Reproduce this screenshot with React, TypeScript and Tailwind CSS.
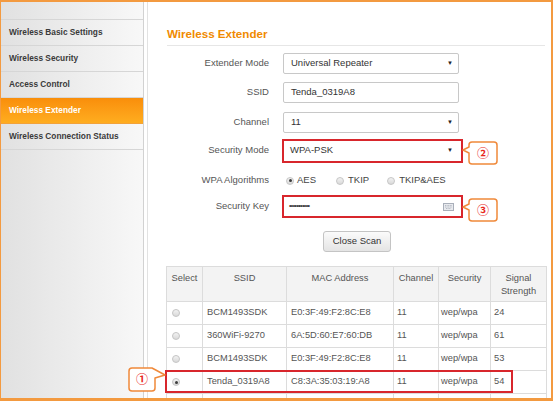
import clsx from 'clsx';

const menu = [
  'Wireless Basic Settings',
  'Wireless Security',
  'Access Control',
  'Wireless Extender',
  'Wireless Connection Status',
];

const networks = [
  { ssid: 'BCM1493SDK', mac: 'E0:3F:49:F2:8C:E8', ch: '11', sec: 'wep/wpa', sig: '24' },
  { ssid: '360WiFi-9270', mac: '6A:5D:60:E7:60:DB', ch: '11', sec: 'wep/wpa', sig: '61' },
  { ssid: 'BCM1493SDK', mac: 'E0:3F:49:F2:8C:E8', ch: '11', sec: 'wep/wpa', sig: '53' },
  { ssid: 'Tenda_0319A8', mac: 'C8:3A:35:03:19:A8', ch: '11', sec: 'wep/wpa', sig: '54', on: true },
  { ssid: 'vivace_hotel WIFI', mac: 'C8:3A:35:F7:25:C8', ch: '11', sec: 'none', sig: '57' },
];

function Radio({ on }: { on?: boolean }) {
  return (
    <span className="w-[8px] h-[8px] shrink-0 rounded-full border border-[#c6c6c6] bg-linear-to-b from-[#f2f2f2] to-[#d9d9d9] flex items-center justify-center">
      {on && <span className="w-[3px] h-[3px] rounded-full bg-[#3c3c3c]" />}
    </span>
  );
}

function Arrow() {
  return <span className="text-[6px] text-[#222] mr-[5px]">▼</span>;
}

// orange speech-bubble tag with a red circled number
function Callout({ n, tail, className }: { n: string; tail: 'left' | 'right'; className: string }) {
  const d =
    tail === 'left'
      ? 'M11 2 H33 Q36 2 36 5 V21 Q36 24 33 24 H11 Q8 24 8 21 V13 L2 10 L8 7 V5 Q8 2 11 2 Z'
      : 'M5 2 H25 L38 9 L28 12 V22 Q28 25 25 25 H5 Q2 25 2 22 V5 Q2 2 5 2 Z';
  return (
    <div className={clsx('absolute w-[40px] h-[27px]', className)}>
      <svg width="40" height="27" className="absolute inset-0">
        <path d={d} fill="white" stroke="#f0893a" strokeWidth="1.5" strokeLinejoin="round" />
      </svg>
      <span
        className={clsx(
          "absolute top-[3px] h-[20px] flex items-center justify-center text-[12px] font-bold text-[#e8271e] font-['Noto_Sans_CJK_SC',sans-serif]",
          tail === 'left' ? 'left-[8px] w-[28px]' : 'left-[2px] w-[26px]'
        )}
      >
        {n}
      </span>
    </div>
  );
}

function Row({ label, mt, children }: { label: string; mt: string; children: React.ReactNode }) {
  return (
    <div className={clsx('flex items-center h-[21px]', mt)}>
      <div className="w-[102px] text-right text-[9.5px] text-[#555]">{label}</div>
      <div className="ml-[14px] flex items-center">{children}</div>
    </div>
  );
}

export default function App() {
  return (
    <div className="relative w-[553px] h-[401px] overflow-hidden bg-white flex border-t-2 border-b-[3px] border-l border-r-2 border-[#f39a40] font-['Liberation_Sans',Arial,sans-serif]">
      {/* Sidebar */}
      <div className="w-[143px] shrink-0 border-r border-[#d2d2d2] bg-linear-to-r from-[#e1e1e1] to-[#f8f8f8]">
        <div className="h-[18px] border-b border-[#d6d6d6]" />
        {menu.map((m) => (
          <div
            key={m}
            className={clsx(
              'h-[26px] flex items-center pl-[8px] text-[8.3px] font-bold border-b',
              m === 'Wireless Extender'
                ? 'bg-linear-to-b from-[#f98e0a] to-[#ffad1f] text-white border-[#f2a23a]'
                : 'text-[#3a3a3a] border-[#d6d6d6]'
            )}
          >
            {m}
          </div>
        ))}
      </div>
      <div className="w-[3px] shrink-0" />

      {/* Content */}
      <div className="flex-1 border-l border-[#e2e2e2] pl-[19px] pr-[2px] pt-[24px] overflow-hidden">
        <div className="text-[11.6px] leading-[16px] font-bold text-[#f08a00] pb-[3px] border-b border-[#e6e6e6] mr-[4px]">
          Wireless Extender
        </div>

        <Row label="Extender Mode" mt="mt-[7px]">
          <div className="w-[176px] h-[21px] border border-[#c8c8c8] rounded-[2px] flex items-center justify-between pl-[7px] text-[9.5px] text-[#333]">
            Universal Repeater <Arrow />
          </div>
        </Row>
        <Row label="SSID" mt="mt-[8px]">
          <div className="w-[176px] h-[21px] border border-[#c8c8c8] rounded-[2px] flex items-center pl-[7px] text-[9.5px] text-[#333]">
            Tenda_0319A8
          </div>
        </Row>
        <Row label="Channel" mt="mt-[9px]">
          <div className="w-[176px] h-[21px] border border-[#c8c8c8] rounded-[2px] flex items-center justify-between pl-[7px] text-[9.5px] text-[#333]">
            11 <Arrow />
          </div>
        </Row>
        <Row label="Security Mode" mt="mt-[7px]">
          <div className="-ml-[1px] w-[181px] h-[24px] border-2 border-[#d8262c] flex items-center justify-between pl-[6px] pr-[3px] text-[9.5px] text-[#333]">
            WPA-PSK <Arrow />
          </div>
        </Row>
        <Row label="WPA Algorithms" mt="mt-[9px]">
          <div className="flex items-center text-[9.5px] text-[#444] pl-[3px]">
            <Radio on />
            <span className="ml-[3px]">AES</span>
            <span className="ml-[20px]">
              <Radio />
            </span>
            <span className="ml-[4px]">TKIP</span>
            <span className="ml-[18px]">
              <Radio />
            </span>
            <span className="ml-[4px]">TKIP&amp;AES</span>
          </div>
        </Row>
        <Row label="Security Key" mt="mt-[5px]">
          <div className="-ml-[1px] w-[181px] h-[23px] border-2 border-[#d8262c] flex items-center justify-between pl-[5px] pr-[7px]">
            <span className="text-[7px] tracking-[-0.6px] text-[#333]">•••••••••••</span>
            <svg width="11" height="8" viewBox="0 0 11 8">
              <rect x="0.5" y="0.5" width="10" height="7" fill="#e8eaee" stroke="#a9afba" />
              <path d="M2 2.5 H9 M2 4 H9 M3 5.5 H8" stroke="#a9afba" strokeWidth="0.8" strokeDasharray="1 0.6" />
            </svg>
          </div>
        </Row>

        <div className="w-[380px] flex justify-center mt-[14px]">
          <button className="w-[68px] h-[21px] border border-[#c4c4c4] rounded-[3px] bg-linear-to-b from-[#fbfbfb] to-[#e4e4e4] text-[9.5px] text-[#333]">
            Close Scan
          </button>
        </div>

        <table className="mt-[14px] -ml-[1px] w-[380px] table-fixed border-collapse text-[9.3px] text-[#555]">
          <colgroup>
            <col className="w-[36px]" />
            <col className="w-[84px]" />
            <col className="w-[107px]" />
            <col className="w-[45px]" />
            <col className="w-[52px]" />
            <col className="w-[56px]" />
          </colgroup>
          <thead>
            <tr className="h-[35px] bg-[#f3f3f3]">
              {['Select', 'SSID', 'MAC Address', 'Channel', 'Security'].map((h) => (
                <th key={h} className="border border-[#dcdcdc] align-top pt-[5px] font-normal leading-[13px]">
                  {h}
                </th>
              ))}
              <th className="border border-[#dcdcdc] align-top pt-[5px] font-normal leading-[13px]">
                Signal
                <br />
                Strength
              </th>
            </tr>
          </thead>
          <tbody>
            {networks.map((n, i) => (
              <tr key={i} className="h-[23px]">
                <td className="border border-[#dcdcdc] pl-[5px]">
                  <Radio on={n.on} />
                </td>
                <td className="border border-[#dcdcdc] pl-[4px] whitespace-nowrap overflow-hidden">{n.ssid}</td>
                <td className="border border-[#dcdcdc] pl-[4px] whitespace-nowrap">{n.mac}</td>
                <td className="border border-[#dcdcdc] pl-[3px]">{n.ch}</td>
                <td className="border border-[#dcdcdc] pl-[2px]">{n.sec}</td>
                <td className="border border-[#dcdcdc] pl-[3px]">{n.sig}</td>
              </tr>
            ))}
          </tbody>
        </table>
      </div>

      {/* annotations */}
      <div className="absolute left-[164px] top-[368px] w-[348px] h-[23px] border-2 border-[#d8262c]" />
      <Callout n="①" tail="right" className="left-[126px] top-[364px]" />
      <Callout n="②" tail="left" className="left-[460px] top-[138px]" />
      <Callout n="③" tail="left" className="left-[460px] top-[195px]" />
    </div>
  );
}
